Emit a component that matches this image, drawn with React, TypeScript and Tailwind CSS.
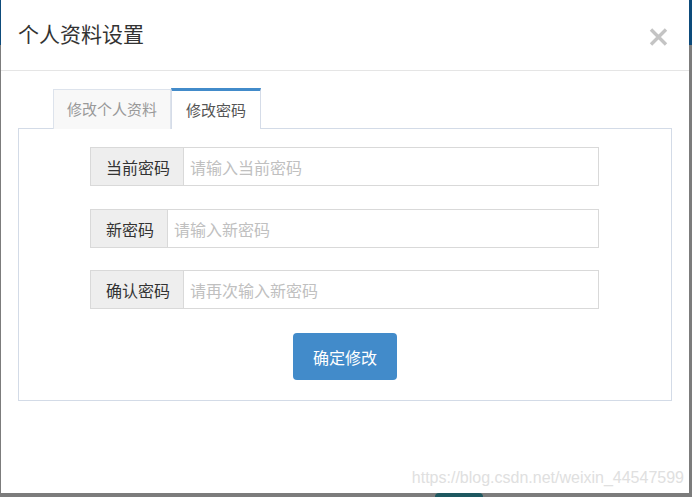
import React from "react";

const cjk = { fontFamily: '"Noto Sans CJK SC", "Microsoft YaHei", sans-serif' };

function InputRow({ label, placeholder, className = "" }: { label: string; placeholder: string; className?: string }) {
  return (
    <div className={"flex h-[39px] w-[509px] border border-[#d9d9d9] bg-white " + className}>
      <div className="flex items-center bg-[#eeeeee] border-r border-[#d9d9d9] pl-[15px] pr-[13px] text-[16px] text-[#333333]">
        {label}
      </div>
      <input
        className="flex-1 pl-[6px] text-[16px] text-[#555] placeholder:text-[#c0c0c0] outline-none bg-white"
        style={cjk}
        placeholder={placeholder}
      />
    </div>
  );
}

export default function App() {
  return (
    <div
      className="w-[692px] h-[497px] flex flex-col bg-[linear-gradient(to_bottom,#0d4b7b_45px,#7c7c7c_45px)] overflow-hidden"
      style={cjk}
    >
      <div className="flex h-[493px]">
        <div className="ml-px w-[688px] h-[493px] bg-white flex flex-col">
          {/* header */}
          <div className="h-[71px] border-b border-[#e5e5e5] flex items-start justify-between pl-[17px] pr-[21px]">
            <div className="mt-[19px] text-[21px] leading-[28px] text-[#333333]">个人资料设置</div>
            <svg className="mt-[28px]" width="19" height="18" viewBox="0 0 19 18">
              <path d="M2 1.5 L17 16.5 M17 1.5 L2 16.5" stroke="#c4c4c4" strokeWidth="3.4" strokeLinecap="butt" />
            </svg>
          </div>
          {/* body */}
          <div className="px-[17px] pt-[17px]">
            <div className="flex ml-[35px] relative z-10 -mb-px">
              <div className="w-[118px] h-[40px] mt-px flex items-center justify-center border border-b-0 border-[#dde3ec] bg-[#f8f8f8] text-[15px] text-[#999999]">
                修改个人资料
              </div>
              <div className="w-[90px] h-[41px] flex items-center justify-center border-t-[3px] border-t-[#428bca] border-x border-x-[#d5dce8] bg-white text-[15px] text-[#555555]">
                修改密码
              </div>
            </div>
            <div className="w-[654px] h-[273px] border border-[#d3dbe7] flex flex-col items-start pl-[71px] pt-[18px]">
              <InputRow label="当前密码" placeholder="请输入当前密码" />
              <InputRow className="mt-[23px]" label="新密码" placeholder="请输入新密码" />
              <InputRow className="mt-[22px]" label="确认密码" placeholder="请再次输入新密码" />
              <button
                className="mt-[24px] ml-[203px] w-[104px] h-[47px] rounded-[4px] bg-[#428bca] text-white text-[16px]"
                style={cjk}
              >
                确定修改
              </button>
            </div>
          </div>
          <div className="mt-auto flex justify-end pr-[5px] pb-[5px]">
            <span
              className="text-[16px] leading-[20px] text-[#e0e0e0]"
              style={{ fontFamily: '"Liberation Sans", Arial, sans-serif' }}
            >
              https://blog.csdn.net/weixin_44547599
            </span>
          </div>
        </div>
      </div>
      <div className="h-[4px] flex">
        <div className="ml-[435px] w-[48px] h-full bg-[#1e5860] rounded-t-[10px]" />
      </div>
    </div>
  );
}
